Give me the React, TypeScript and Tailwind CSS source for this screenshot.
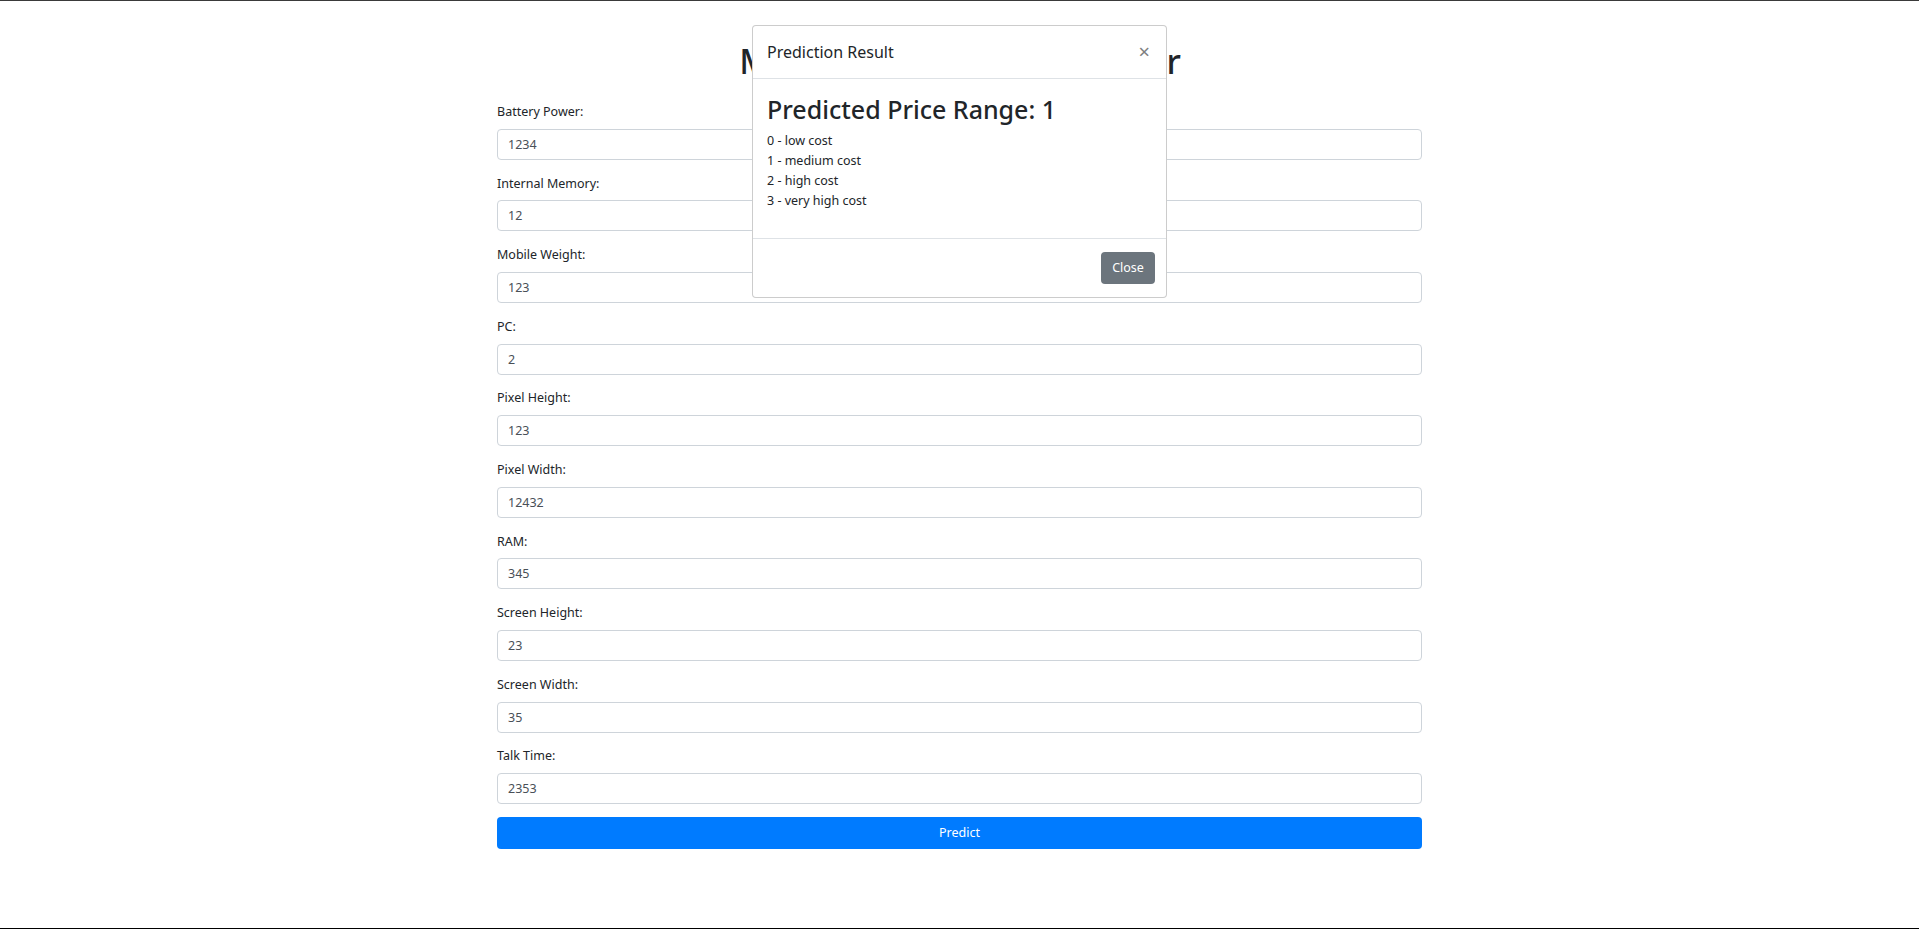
const fields = [
  { label: 'Battery Power:', value: '1234' },
  { label: 'Internal Memory:', value: '12' },
  { label: 'Mobile Weight:', value: '123' },
  { label: 'PC:', value: '2' },
  { label: 'Pixel Height:', value: '123' },
  { label: 'Pixel Width:', value: '12432' },
  { label: 'RAM:', value: '345' },
  { label: 'Screen Height:', value: '23' },
  { label: 'Screen Width:', value: '35' },
  { label: 'Talk Time:', value: '2353' },
]

const costs = ['0 - low cost', '1 - medium cost', '2 - high cost', '3 - very high cost']

export default function App() {
  return (
    <div className="relative h-[929px] bg-white border-t border-[#3a3a3a] border-b border-b-black font-['Noto_Sans',sans-serif] text-[#212529] overflow-hidden">
      {/* Form */}
      <div className="w-[925px] mx-auto pt-[39px]">
        <h1 className="text-center text-[34px] leading-[42px] font-medium tracking-[-1.05px] mb-[19px] whitespace-nowrap">
          Mobile Price Range Predictor
        </h1>

        <form onSubmit={(e) => e.preventDefault()}>
          {fields.map((f) => (
            <div key={f.label} className="mb-[12.8px]">
              <label className="block text-[12.5px] leading-[21.4px] mb-[6.4px]">{f.label}</label>
              <input
                type="text"
                defaultValue={f.value}
                className="block w-full h-[31px] px-[10px] text-[12.5px] text-[#495057] border border-[#ced4da] rounded-[4px] outline-none"
              />
            </div>
          ))}
          <button
            type="submit"
            className="w-full h-[32px] bg-[#007bff] text-white text-[12.5px] rounded-[4px]"
          >
            Predict
          </button>
        </form>
      </div>

      {/* Modal */}
      <div className="absolute left-[752px] top-[24px] w-[415px] bg-white border border-[rgba(0,0,0,0.2)] rounded-[4px]">
        <div className="flex items-center justify-between h-[53px] px-[14px] border-b border-[#dee2e6]">
          <h5 className="text-[16px] leading-[24px]">Prediction Result</h5>
          <button className="text-[20px] leading-none text-[#808080] pr-[2px]">×</button>
        </div>
        <div className="px-[14px] pt-[14px] pb-[27px]">
          <h3 className="text-[25px] leading-[32px] font-medium mb-[6px]">Predicted Price Range: 1</h3>
          <p className="text-[12.5px] leading-[20px]">
            {costs.map((c) => (
              <span key={c} className="block">{c}</span>
            ))}
          </p>
        </div>
        <div className="flex justify-end h-[59px] items-center px-[11px] border-t border-[#dee2e6]">
          <button className="h-[32px] w-[54px] bg-[#6c757d] text-white text-[12.5px] rounded-[4px]">Close</button>
        </div>
      </div>
    </div>
  )
}
